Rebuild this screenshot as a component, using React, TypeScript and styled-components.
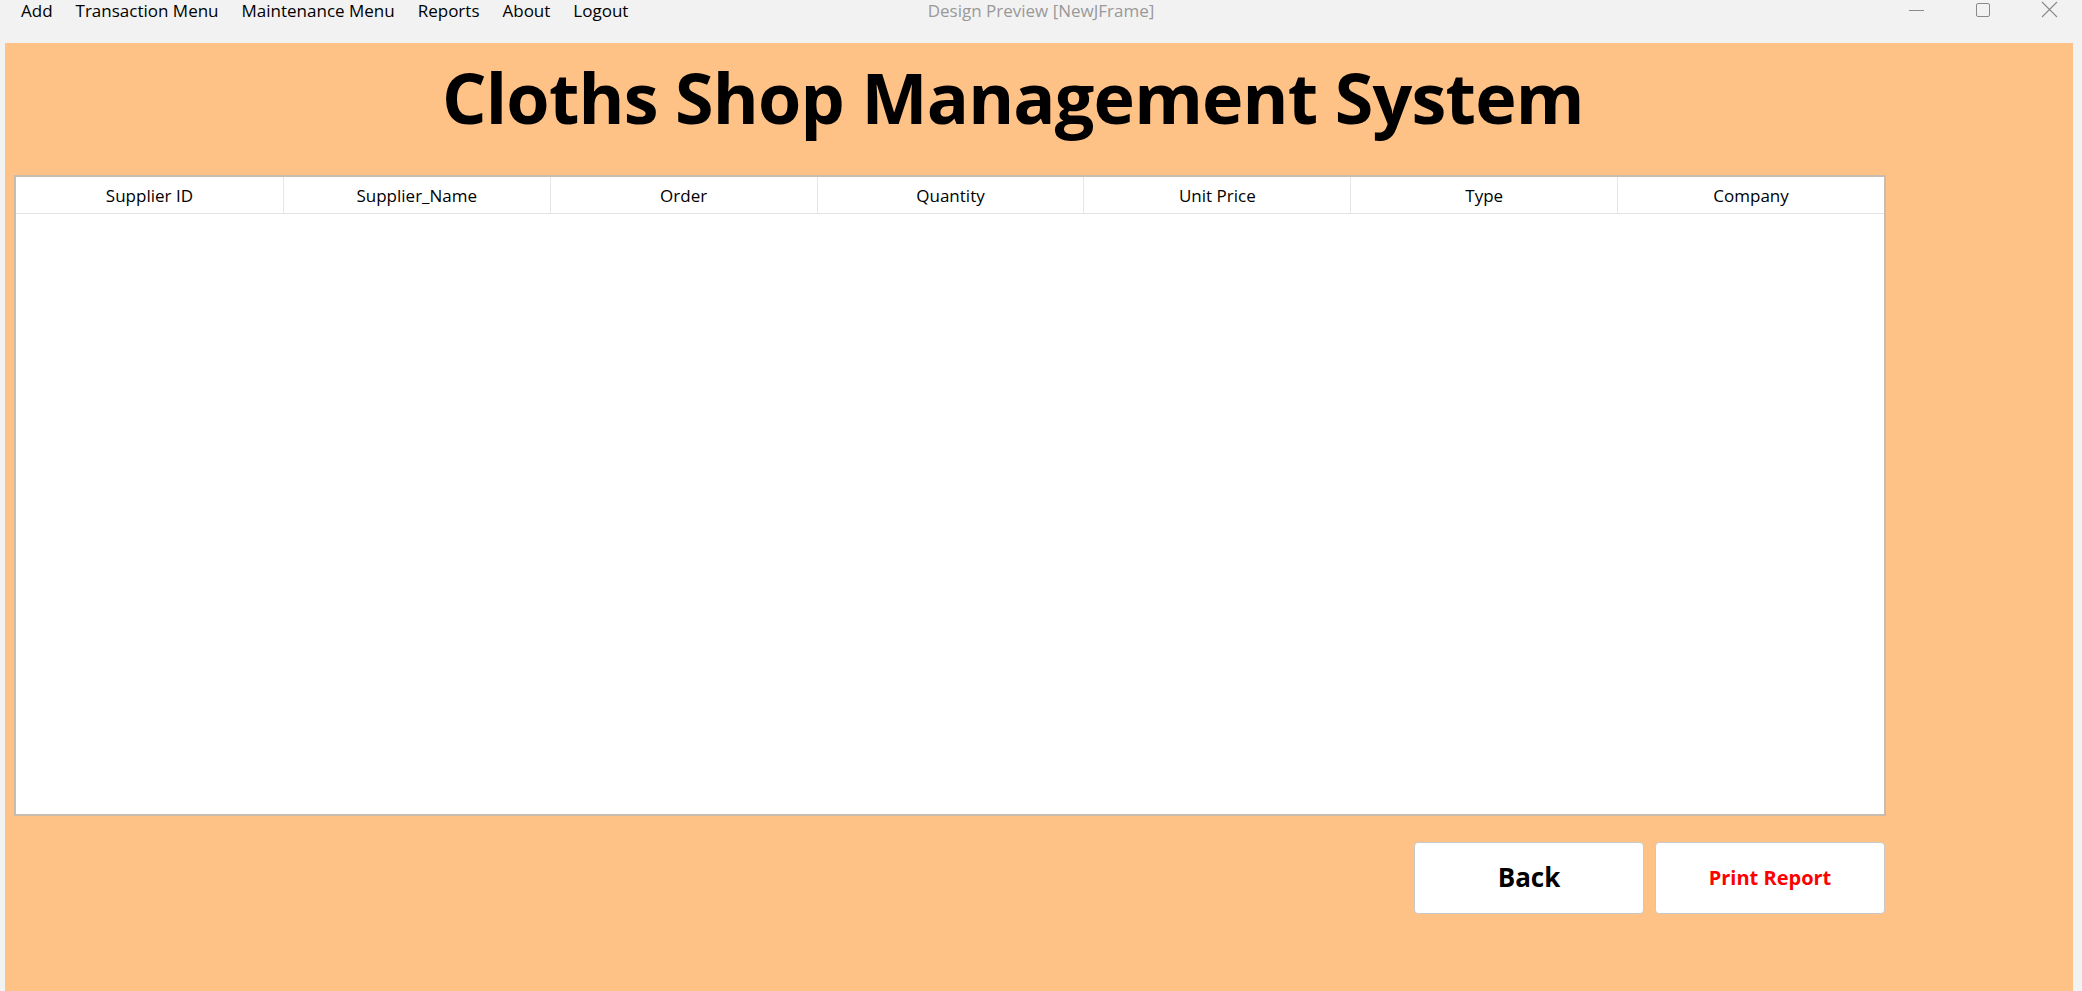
import React from "react";
import styled, { createGlobalStyle } from "styled-components";

const GlobalStyle = createGlobalStyle`
  html, body { margin: 0; padding: 0; }
  body { background: #f2f2f2; font-family: "Open Sans", "Noto Sans", sans-serif; }
  * { box-sizing: border-box; }
`;

const Window = styled.div`
  width: 2082px;
  height: 991px;
  display: flex;
  flex-direction: column;
  background: #f2f2f2;
  overflow: hidden;
`;

const TitleBar = styled.div`
  height: 43px;
  flex: none;
  display: grid;
  grid-template-columns: 1fr auto 1fr;
  align-items: start;
`;

const MenuBar = styled.nav`
  display: flex;
  padding-left: 9.5px;
`;

const MenuItem = styled.span`
  padding: 0 11.5px;
  font-size: 17px;
  line-height: 22px;
  color: #000;
`;

const WindowTitle = styled.div`
  font-size: 17px;
  line-height: 22px;
  color: #999;
`;

const Controls = styled.div`
  display: flex;
  justify-content: flex-end;
  align-items: center;
  height: 20px;
  padding-right: 24px;
  gap: 50px;
  color: #8a8a8a;
`;

const Content = styled.main`
  flex: 1;
  margin: 0 9px 0 5px;
  background: #fec186;
  padding: 0 0 0 9px;
  display: flex;
  flex-direction: column;
`;

const Heading = styled.h1<{ $indent: number }>`
  margin: 0;
  height: 132px;
  padding: 6px 0 0 ${(p) => p.$indent}px;
  font-size: 70px;
  font-weight: 700;
  line-height: 96px;
  color: #000;
  letter-spacing: -0.8px;
  white-space: nowrap;
`;

const Table = styled.div`
  width: 1872px;
  height: 641px;
  border: 2px solid #c9bcae;
  background: #fff;
`;

const HeaderRow = styled.div`
  display: grid;
  grid-template-columns: repeat(7, 1fr);
  height: 37px;
  border-bottom: 1px solid #e3e3e3;
`;

const HeaderCell = styled.div`
  display: flex;
  align-items: center;
  justify-content: center;
  font-size: 17px;
  color: #000;
  border-left: 1px solid #e6e6e6;
  &:first-child { border-left: none; }
`;

const ButtonRow = styled.div`
  width: 1872px;
  display: flex;
  justify-content: flex-end;
  gap: 11px;
  padding-top: 26px;
  padding-right: 1px;
`;

const Button = styled.button<{ $color: string; $size: number }>`
  width: 230px;
  height: 72px;
  background: #fff;
  border: 1px solid #c8c8c8;
  border-radius: 4px;
  font-family: "Open Sans", "Noto Sans", sans-serif;
  font-weight: 700;
  font-size: ${(p) => p.$size}px;
  color: ${(p) => p.$color};
  padding: 0 0 2px;
`;

const columns = ["Supplier ID", "Supplier_Name", "Order", "Quantity", "Unit Price", "Type", "Company"];
const menus = ["Add", "Transaction Menu", "Maintenance Menu", "Reports", "About", "Logout"];

export default function App() {
  return (
    <>
      <GlobalStyle />
      <Window>
        <TitleBar>
          <MenuBar>
            {menus.map((m) => (
              <MenuItem key={m}>{m}</MenuItem>
            ))}
          </MenuBar>
          <WindowTitle>Design Preview [NewJFrame]</WindowTitle>
          <Controls>
            <svg width="16" height="20" viewBox="0 0 16 20">
              <line x1="0" y1="10.5" x2="15" y2="10.5" stroke="currentColor" strokeWidth="1" />
            </svg>
            <svg width="16" height="20" viewBox="0 0 16 20">
              <rect x="1.5" y="3.5" width="13" height="13" rx="1.5" fill="none" stroke="currentColor" strokeWidth="1" />
            </svg>
            <svg width="17" height="20" viewBox="0 0 17 20">
              <path d="M1 2 L16 17 M16 2 L1 17" stroke="currentColor" strokeWidth="1.1" fill="none" />
            </svg>
          </Controls>
        </TitleBar>
        <Content>
          <Heading $indent={428}>Cloths Shop Management System</Heading>
          <Table>
            <HeaderRow>
              {columns.map((c) => (
                <HeaderCell key={c}>{c}</HeaderCell>
              ))}
            </HeaderRow>
          </Table>
          <ButtonRow>
            <Button $color="#000" $size={26}>Back</Button>
            <Button $color="#ff0000" $size={20}>Print Report</Button>
          </ButtonRow>
        </Content>
      </Window>
    </>
  );
}
